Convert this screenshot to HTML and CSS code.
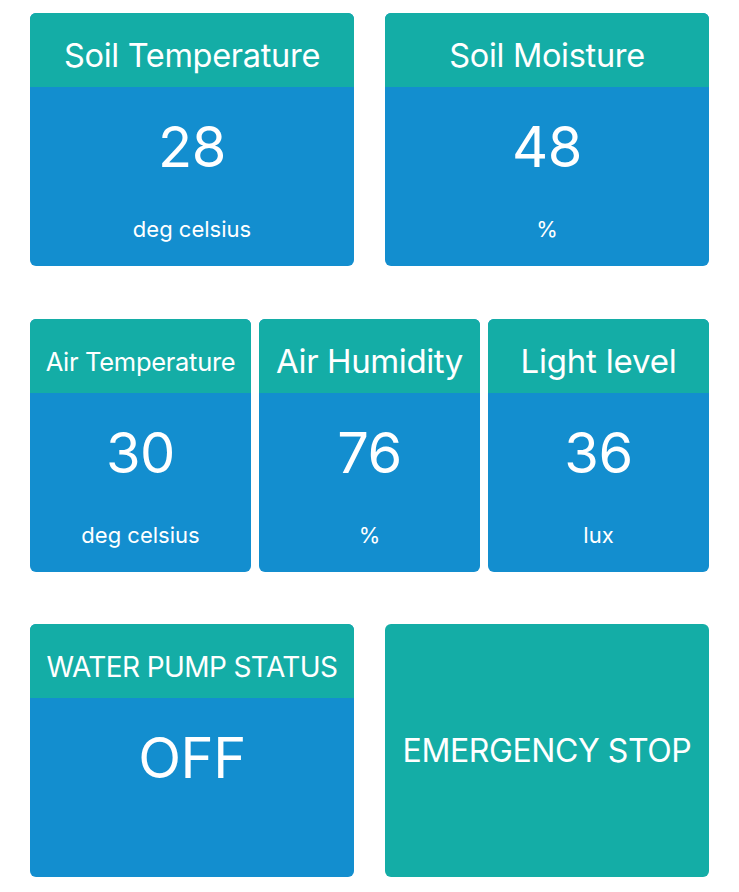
FILE: index.html
```html
<!DOCTYPE html>
<html lang="en">
<head>
<meta charset="utf-8">
<title>Greenhouse Monitor</title>
<link rel="stylesheet" href="styles.css">
</head>
<body>
<main class="dashboard">
  <section class="row row-2">
    <div class="card">
      <div class="card-head"><span class="title t-soil-temp">Soil Temperature</span></div>
      <div class="card-body">
        <div class="value">28</div>
        <div class="unit">deg celsius</div>
      </div>
    </div>
    <div class="card">
      <div class="card-head"><span class="title t-soil-moist">Soil Moisture</span></div>
      <div class="card-body">
        <div class="value">48</div>
        <div class="unit">%</div>
      </div>
    </div>
  </section>

  <section class="row row-3">
    <div class="card">
      <div class="card-head"><span class="title t-air-temp">Air Temperature</span></div>
      <div class="card-body">
        <div class="value">30</div>
        <div class="unit">deg celsius</div>
      </div>
    </div>
    <div class="card">
      <div class="card-head"><span class="title t-air-hum">Air Humidity</span></div>
      <div class="card-body">
        <div class="value">76</div>
        <div class="unit">%</div>
      </div>
    </div>
    <div class="card">
      <div class="card-head"><span class="title t-light">Light level</span></div>
      <div class="card-body">
        <div class="value">36</div>
        <div class="unit">lux</div>
      </div>
    </div>
  </section>

  <section class="row row-2">
    <div class="card">
      <div class="card-head"><span class="title t-pump">WATER PUMP STATUS</span></div>
      <div class="card-body">
        <div class="value">OFF</div>
      </div>
    </div>
    <button class="card stop-button" type="button"><span class="title t-stop">EMERGENCY STOP</span></button>
  </section>
</main>
</body>
</html>
```

FILE: styles.css
```css
* { box-sizing: border-box; }

html, body {
  margin: 0;
  padding: 0;
  background: #ffffff;
}

body {
  font-family: Inter, "Noto Sans", "Liberation Sans", sans-serif;
  color: #ffffff;
}

.dashboard {
  display: flex;
  flex-direction: column;
  gap: 52.5px;
  padding: 13px 30px 0;
}

.row {
  display: grid;
  height: 253px;
}

.row-2 {
  grid-template-columns: 1fr 1fr;
  column-gap: 31px;
}

.row-3 {
  grid-template-columns: 1fr 1fr 1fr;
  column-gap: 8px;
}

.card {
  display: flex;
  flex-direction: column;
  height: 253px;
  border-radius: 6px;
  overflow: hidden;
  background: #138ecf;
}

.card-head {
  height: 74px;
  flex: none;
  display: flex;
  align-items: center;
  justify-content: center;
  padding-top: 12px;
  background: #14ada6;
  white-space: nowrap;
}

.title {
  font-weight: 400;
  line-height: 1;
}

.t-soil-temp { font-size: 32.5px; letter-spacing: -0.3px; }
.t-soil-moist { font-size: 32.5px; letter-spacing: -0.3px; }
.t-air-temp { font-size: 25.5px; letter-spacing: -0.3px; }
.t-air-hum { font-size: 33px; letter-spacing: -0.4px; }
.t-light { font-size: 33px; letter-spacing: -0.2px; }
.t-pump { font-size: 28px; letter-spacing: -0.6px; }
.t-stop { font-size: 32px; letter-spacing: -0.4px; }

.card-body {
  flex: 1;
  display: flex;
  flex-direction: column;
  align-items: center;
  padding-top: 27px;
  padding-bottom: 25px;
}

.value {
  font-size: 56px;
  line-height: 66px;
  letter-spacing: -0.5px;
}

.unit {
  margin-top: auto;
  font-size: 22px;
  line-height: 24px;
}

.stop-button {
  border: 0;
  margin: 0;
  padding: 0;
  background: #14ada6;
  color: #ffffff;
  font-family: inherit;
  align-items: center;
  justify-content: center;
  cursor: pointer;
}
```
